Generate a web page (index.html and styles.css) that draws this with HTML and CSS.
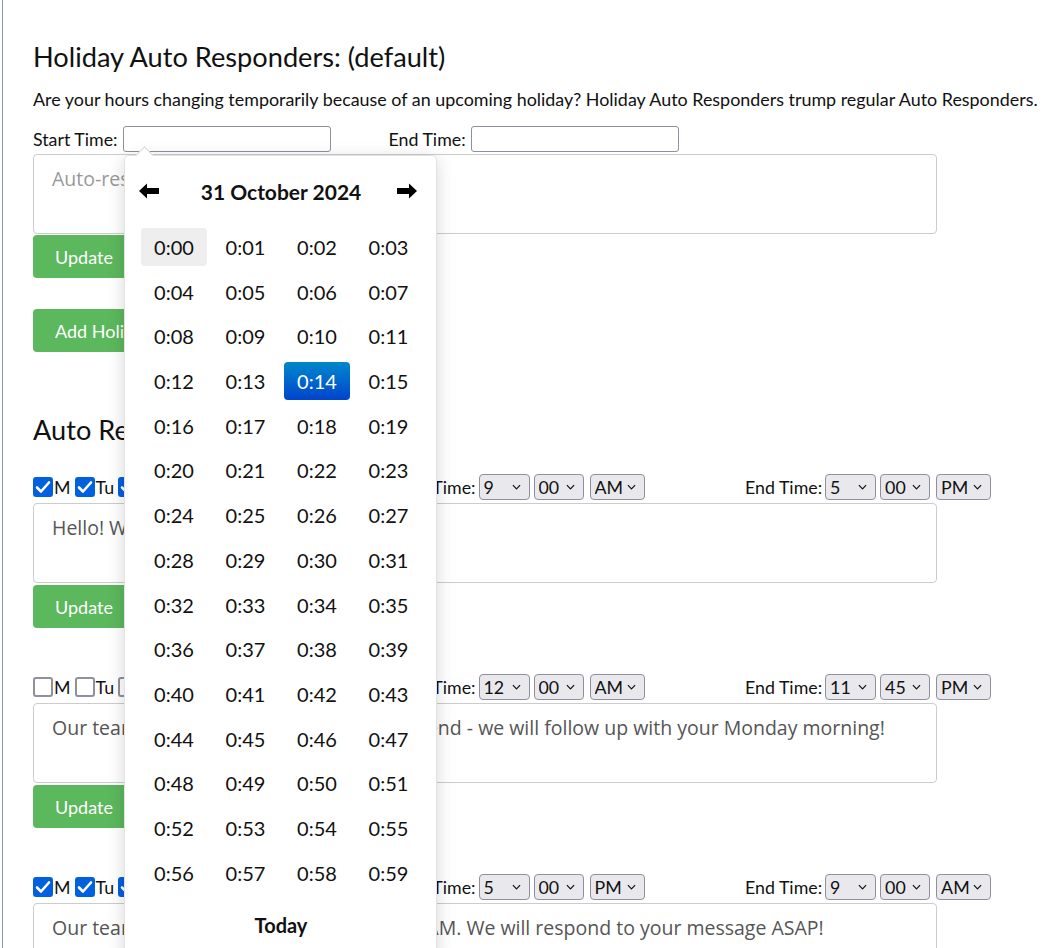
FILE: index.html
```html
<!DOCTYPE html>
<html>
  <head>
    <title>Auto Responders</title>
    <link rel="stylesheet" href="styles.css">
  </head>
  <body>
    <div class="page">
      <h2 class="title">Holiday Auto Responders: (default)</h2>
      <p class="intro">Are your hours changing temporarily because of an upcoming holiday? Holiday Auto Responders trump regular Auto Responders.</p>

      <div class="holiday-times">
        <label class="field">Start Time: <input class="time-input" type="text"></label>
        <label class="field field-end">End Time: <input class="time-input" type="text"></label>
      </div>
      <textarea class="message" placeholder="Auto-response message"></textarea>
      <div>
        <button class="btn">Update</button>
      </div>
      <div>
        <button class="btn btn-add">Add Holiday Auto Responder</button>
      </div>

      <h2 class="title title-auto">Auto Responders</h2>

      <div class="responder responder-first">
        <div class="responder-row">
          <div class="days">
            <label class="day"><input type="checkbox" checked>M</label>
            <label class="day"><input type="checkbox" checked>Tu</label>
            <label class="day"><input type="checkbox" checked>W</label>
            <label class="day"><input type="checkbox" checked>Th</label>
            <label class="day"><input type="checkbox" checked>F</label>
            <label class="day"><input type="checkbox">Sa</label>
            <label class="day"><input type="checkbox">Su</label>
          </div>
          <div class="time-group">Start Time:
            <select class="sel sel-hour"><option>9</option></select>
            <select class="sel sel-min"><option>00</option></select>
            <select class="sel sel-ampm"><option>AM</option></select>
          </div>
          <div class="time-group">End Time:
            <select class="sel sel-hour"><option>5</option></select>
            <select class="sel sel-min"><option>00</option></select>
            <select class="sel sel-ampm"><option>PM</option></select>
          </div>
        </div>
        <textarea class="message">Hello! We will be with you shortly.</textarea>
        <div>
          <button class="btn">Update</button>
        </div>
      </div>

      <div class="responder">
        <div class="responder-row">
          <div class="days">
            <label class="day"><input type="checkbox">M</label>
            <label class="day"><input type="checkbox">Tu</label>
            <label class="day"><input type="checkbox">W</label>
            <label class="day"><input type="checkbox">Th</label>
            <label class="day"><input type="checkbox">F</label>
            <label class="day"><input type="checkbox" checked>Sa</label>
            <label class="day"><input type="checkbox" checked>Su</label>
          </div>
          <div class="time-group">Start Time:
            <select class="sel sel-hour"><option>12</option></select>
            <select class="sel sel-min"><option>00</option></select>
            <select class="sel sel-ampm"><option>AM</option></select>
          </div>
          <div class="time-group">End Time:
            <select class="sel sel-hour"><option>11</option></select>
            <select class="sel sel-min"><option>45</option></select>
            <select class="sel sel-ampm"><option>PM</option></select>
          </div>
        </div>
        <textarea class="message">Our team is currently closed for the weekend - we will follow up with your Monday morning!</textarea>
        <div>
          <button class="btn">Update</button>
        </div>
      </div>

      <div class="responder">
        <div class="responder-row">
          <div class="days">
            <label class="day"><input type="checkbox" checked>M</label>
            <label class="day"><input type="checkbox" checked>Tu</label>
            <label class="day"><input type="checkbox" checked>W</label>
            <label class="day"><input type="checkbox" checked>Th</label>
            <label class="day"><input type="checkbox" checked>F</label>
            <label class="day"><input type="checkbox">Sa</label>
            <label class="day"><input type="checkbox">Su</label>
          </div>
          <div class="time-group">Start Time:
            <select class="sel sel-hour"><option>5</option></select>
            <select class="sel sel-min"><option>00</option></select>
            <select class="sel sel-ampm"><option>PM</option></select>
          </div>
          <div class="time-group">End Time:
            <select class="sel sel-hour"><option>9</option></select>
            <select class="sel sel-min"><option>00</option></select>
            <select class="sel sel-ampm"><option>AM</option></select>
          </div>
        </div>
        <textarea class="message">Our team is currently out of office until 9 AM. We will respond to your message ASAP!</textarea>
        <div>
          <button class="btn">Update</button>
        </div>
      </div>
    </div>

    <!-- time picker open under the holiday start time -->
    <div class="picker">
      <div class="picker-head">
        <span class="picker-nav">
          <svg width="22" height="18" viewBox="0 0 22 18"><path d="M1 9 L9 1.5 L9 6 L21 6 L21 12 L9 12 L9 16.5 Z" fill="#000"/></svg>
        </span>
        <span class="picker-date">31 October 2024</span>
        <span class="picker-nav">
          <svg width="22" height="18" viewBox="0 0 22 18"><path d="M21 9 L13 1.5 L13 6 L1 6 L1 12 L13 12 L13 16.5 Z" fill="#000"/></svg>
        </span>
      </div>
      <div class="picker-grid js-minutes"></div>
      <div class="picker-today">Today</div>
    </div>

    <script>
      const grid = document.querySelector('.js-minutes');
      let html = '';

      for (let i = 0; i < 60; i++) {
        let cls = 'minute';
        if (i === 0) {
          cls += ' minute-hover';
        } else if (i === 14) {
          cls += ' minute-active';
        }
        const label = i < 10 ? '0' + i : '' + i;
        html += `<span class="${cls}">0:${label}</span>`;
      }

      grid.innerHTML = html;
    </script>
  </body>
</html>
```

FILE: styles.css
```css
body {
  margin: 0;
  background-color: white;
  font-family: Lato, "Open Sans", sans-serif;
  color: #111;
}

.page {
  margin-left: 2px;
  border-left: 1px solid #8c96a3;
  padding: 41px 0 40px 30px;
  min-height: 948px;
}

.title {
  margin: 0;
  font-size: 27.2px;
  font-weight: normal;
  line-height: 32px;
}

.title-auto {
  margin-top: 62px;
}

.intro {
  margin: 14px 0 0;
  font-size: 17.9px;
  line-height: 24px;
}

.holiday-times {
  margin-top: 15px;
  display: flex;
  align-items: center;
  height: 26px;
  font-size: 17.8px;
}

.field {
  display: flex;
  align-items: center;
  gap: 5px;
}

.field-end {
  margin-left: 58px;
}

.time-input {
  width: 208px;
  height: 26px;
  box-sizing: border-box;
  border: 1px solid #8f8f9d;
  border-radius: 3px;
  padding: 2px 4px;
  font-size: 16px;
}

.message {
  display: block;
  box-sizing: border-box;
  width: 904px;
  height: 80px;
  margin-top: 2px;
  padding: 10px 18px;
  border: 1px solid #ccc;
  border-radius: 4px;
  font-family: "Open Sans", sans-serif;
  font-size: 19.5px;
  line-height: 28px;
  color: #555;
  resize: none;
}

.message::placeholder {
  color: #999;
}

.btn {
  margin-top: 1px;
  height: 43px;
  padding: 0 22px;
  background-color: #5cb85c;
  color: white;
  border: none;
  border-radius: 4px;
  font-family: Lato, sans-serif;
  font-size: 18px;
}

.btn-add {
  margin-top: 31px;
}

.responder {
  margin-bottom: 46px;
}

.responder .message {
  margin-top: 3px;
}

.responder .btn {
  margin-top: 2px;
}

.responder-first {
  margin-top: 28px;
}

.responder-row {
  display: grid;
  grid-template-columns: 358px 354px auto;
  align-items: center;
  height: 26px;
  font-size: 17.8px;
}

.days {
  display: flex;
  align-items: center;
  gap: 4px;
}

.day {
  display: flex;
  align-items: center;
  gap: 1px;
}

.day input {
  appearance: none;
  width: 20px;
  height: 20px;
  margin: 0;
  box-sizing: border-box;
  border: 2px solid #8f8f9d;
  border-radius: 3px;
  background-color: white;
}

.day input:checked {
  border-color: #0060df;
  background-color: #0060df;
  background-image: url("data:image/svg+xml,%3Csvg xmlns='http://www.w3.org/2000/svg' viewBox='0 0 20 20'%3E%3Cpath d='M4 10.5 L8 14.5 L16 5.5' fill='none' stroke='white' stroke-width='2.6' stroke-linecap='round' stroke-linejoin='round'/%3E%3C/svg%3E");
  background-size: 20px 20px;
  background-position: center;
}

.time-group {
  display: flex;
  align-items: center;
  gap: 4px;
}

.sel {
  appearance: none;
  height: 26px;
  box-sizing: border-box;
  border: 1px solid #8f8f9d;
  border-radius: 4px;
  background-color: #e9e9ed;
  background-image: url("data:image/svg+xml,%3Csvg xmlns='http://www.w3.org/2000/svg' viewBox='0 0 10 6'%3E%3Cpath d='M1 1 L5 5 L9 1' fill='none' stroke='%23111' stroke-width='1.3'/%3E%3C/svg%3E");
  background-repeat: no-repeat;
  background-size: 9px 6px;
  background-position: right 8px center;
  padding: 0 4px;
  font-family: Lato, sans-serif;
  font-size: 17.8px;
  color: #111;
}

.sel-hour {
  width: 51px;
  margin-left: -1px;
}

.sel-min {
  width: 50px;
}

.sel-ampm {
  width: 55px;
  margin-left: 2px;
}

/* picker */

.picker {
  position: absolute;
  left: 124px;
  top: 155px;
  width: 313px;
  box-sizing: border-box;
  background-color: white;
  border: 1px solid #e2e2e2;
  border-radius: 5px;
  box-shadow: 0 4px 18px rgba(0, 0, 0, 0.16);
  padding: 0 15px 22px 16px;
}

.picker::before {
  content: "";
  position: absolute;
  left: 13px;
  top: -7px;
  width: 12px;
  height: 12px;
  background-color: white;
  border-left: 1px solid #d8d8d8;
  border-top: 1px solid #d8d8d8;
  transform: rotate(45deg);
}

.picker-head {
  height: 70px;
  display: flex;
  align-items: center;
  justify-content: space-between;
  padding: 0 3px 2px 0;
  margin-left: -3px;
}

.picker-nav {
  display: flex;
  width: 22px;
  height: 18px;
}

.picker-date {
  padding-left: 6px;
  font-size: 21px;
  font-weight: bold;
  color: #111;
}

.picker-grid {
  display: grid;
  grid-template-columns: repeat(4, 66px);
  column-gap: 5.5px;
  row-gap: 6.7px;
}

.minute {
  height: 38px;
  display: flex;
  align-items: center;
  justify-content: center;
  border-radius: 4px;
  font-size: 20px;
  color: #111;
}

.minute-hover {
  background-color: #eee;
}

.minute-active {
  background-image: linear-gradient(#0088cc, #0044cc);
  color: white;
}

.picker-today {
  margin-top: 21px;
  text-align: center;
  font-size: 20px;
  font-weight: bold;
  color: #111;
}
```
